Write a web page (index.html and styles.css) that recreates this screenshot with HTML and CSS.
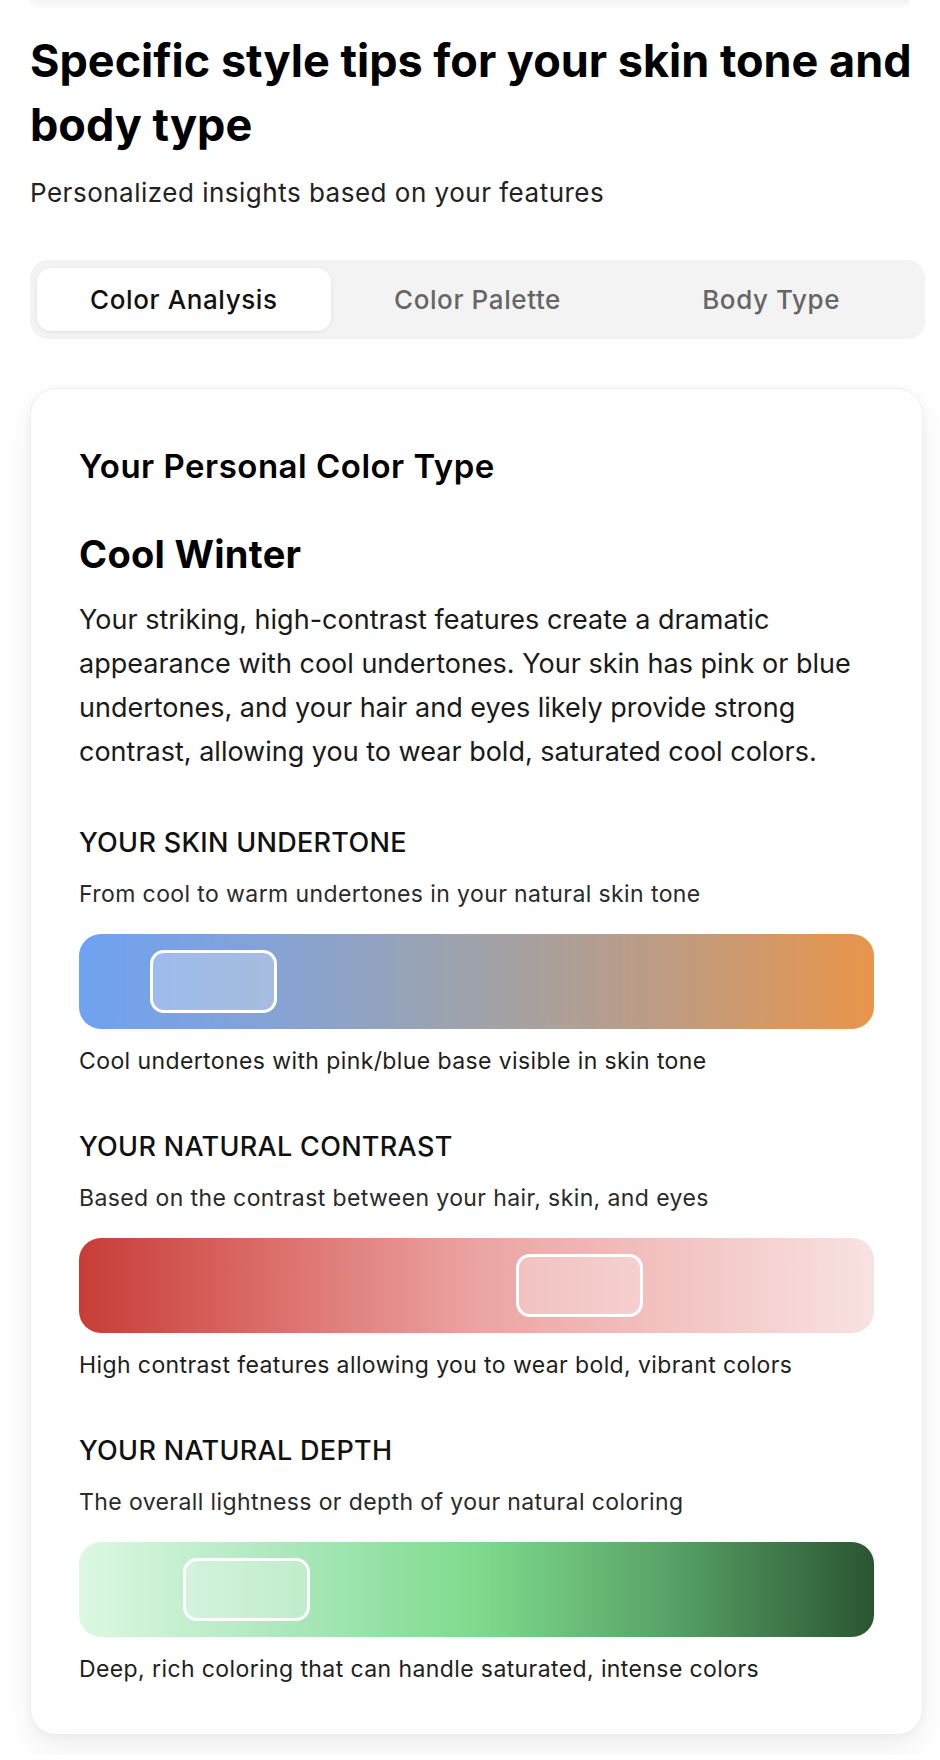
FILE: index.html
```html
<!DOCTYPE html>
<html lang="en">
<head>
<meta charset="utf-8">
<title>Style tips</title>
<link rel="stylesheet" href="styles.css">
</head>
<body>
<div class="prev-edge"></div>
<main class="page">
  <h1 class="title">Specific style tips for your skin tone and body type</h1>
  <p class="subtitle">Personalized insights based on your features</p>

  <nav class="tabs">
    <button class="tab tab-active">Color Analysis</button>
    <button class="tab">Color Palette</button>
    <button class="tab">Body Type</button>
  </nav>

  <section class="card">
    <h2 class="card-title">Your Personal Color Type</h2>
    <h3 class="type-name">Cool Winter</h3>
    <p class="type-desc">Your striking, high-contrast features create a dramatic appearance with cool undertones. Your skin has pink or blue undertones, and your hair and eyes likely provide strong contrast, allowing you to wear bold, saturated cool colors.</p>

    <div class="metric">
      <h4 class="metric-label">YOUR SKIN UNDERTONE</h4>
      <p class="metric-sub">From cool to warm undertones in your natural skin tone</p>
      <div class="scale scale-undertone"><span class="marker" style="left: 8.9%"></span></div>
      <p class="metric-note">Cool undertones with pink/blue base visible in skin tone</p>
    </div>

    <div class="metric">
      <h4 class="metric-label">YOUR NATURAL CONTRAST</h4>
      <p class="metric-sub">Based on the contrast between your hair, skin, and eyes</p>
      <div class="scale scale-contrast"><span class="marker" style="left: 55%"></span></div>
      <p class="metric-note">High contrast features allowing you to wear bold, vibrant colors</p>
    </div>

    <div class="metric">
      <h4 class="metric-label">YOUR NATURAL DEPTH</h4>
      <p class="metric-sub">The overall lightness or depth of your natural coloring</p>
      <div class="scale scale-depth"><span class="marker" style="left: 13.1%"></span></div>
      <p class="metric-note">Deep, rich coloring that can handle saturated, intense colors</p>
    </div>
  </section>
</main>
</body>
</html>
```

FILE: styles.css
```css
* {
  box-sizing: border-box;
}

html, body {
  margin: 0;
  padding: 0;
  background: #ffffff;
}

body {
  font-family: Inter, "Noto Sans", "Liberation Sans", sans-serif;
  color: #111111;
}

.prev-edge {
  height: 8px;
  margin: 0 30px 0 30px;
  background: linear-gradient(to bottom, #f4f4f4, #fcfcfc);
  border-radius: 0 0 16px 16px;
}

.page {
  width: 895px;
  margin-left: 30px;
  padding-top: 21px;
  padding-bottom: 20px;
}

.title {
  margin: 0;
  font-size: 45px;
  line-height: 64px;
  font-weight: 700;
  letter-spacing: 0;
  color: #000000;
}

.subtitle {
  margin: 20px 0 0 0;
  font-size: 26px;
  line-height: 32px;
  letter-spacing: 0.5px;
  color: #222222;
}

.tabs {
  margin-top: 51px;
  display: grid;
  grid-template-columns: 1fr 1fr 1fr;
  padding: 8px 7px;
  height: 79px;
  background: #f3f3f3;
  border-radius: 18px;
}

.tab {
  border: none;
  background: transparent;
  font-family: inherit;
  font-size: 26px;
  letter-spacing: 0.6px;
  font-weight: 500;
  color: #666666;
  border-radius: 14px;
  cursor: pointer;
  padding: 0;
}

.tab-active {
  background: #ffffff;
  color: #111111;
  box-shadow: 0 1px 4px rgba(0, 0, 0, 0.08);
}

.card {
  margin-top: 49px;
  width: 893px;
  border: 1px solid #efefef;
  border-radius: 26px;
  background: #ffffff;
  padding: 57px 48px 51px 48px;
  box-shadow: 0 12px 30px rgba(0, 0, 0, 0.07), 0 2px 8px rgba(0, 0, 0, 0.03);
}

.card-title {
  margin: 0;
  font-size: 33px;
  line-height: 40px;
  letter-spacing: 0.5px;
  font-weight: 600;
  color: #000000;
}

.type-name {
  margin: 46px 0 0 0;
  font-size: 38px;
  line-height: 44px;
  letter-spacing: 0.3px;
  font-weight: 700;
  color: #000000;
}

.type-desc {
  margin: 22px 0 0 0;
  font-size: 27px;
  line-height: 44px;
  color: #1a1a1a;
}

.metric {
  margin-top: 56px;
}

.type-desc + .metric {
  margin-top: 53px;
}

.metric-label {
  margin: 0;
  font-size: 27px;
  line-height: 32px;
  letter-spacing: 0.3px;
  font-weight: 500;
  color: #111111;
}

.metric-sub {
  margin: 21px 0 0 0;
  font-size: 23px;
  line-height: 28px;
  letter-spacing: 0.4px;
  color: #2a2a2a;
}

.scale {
  position: relative;
  margin-top: 26px;
  height: 95px;
  border-radius: 22px;
}

.scale-undertone {
  background: linear-gradient(to right, #6fa2f1 0%, #8aa3cc 30%, #a0a3ab 50%, #c09c80 75%, #ea944a 100%);
}

.scale-contrast {
  background: linear-gradient(to right, #c83c36 0%, #dc6f6c 25%, #eba4a2 50%, #f2c0bf 72%, #f8e2e1 100%);
}

.scale-depth {
  background: linear-gradient(to right, #ddf8e3 0%, #aee8be 25%, #7edb8d 50%, #57a065 75%, #2a5531 100%);
}

.marker {
  position: absolute;
  top: 16px;
  width: 127px;
  height: 63px;
  border: 3px solid #ffffff;
  border-radius: 14px;
  background: rgba(255, 255, 255, 0.28);
}

.metric-note {
  margin: 18px 0 0 0;
  font-size: 23px;
  line-height: 28px;
  letter-spacing: 0.4px;
  color: #1e1e1e;
}
```
